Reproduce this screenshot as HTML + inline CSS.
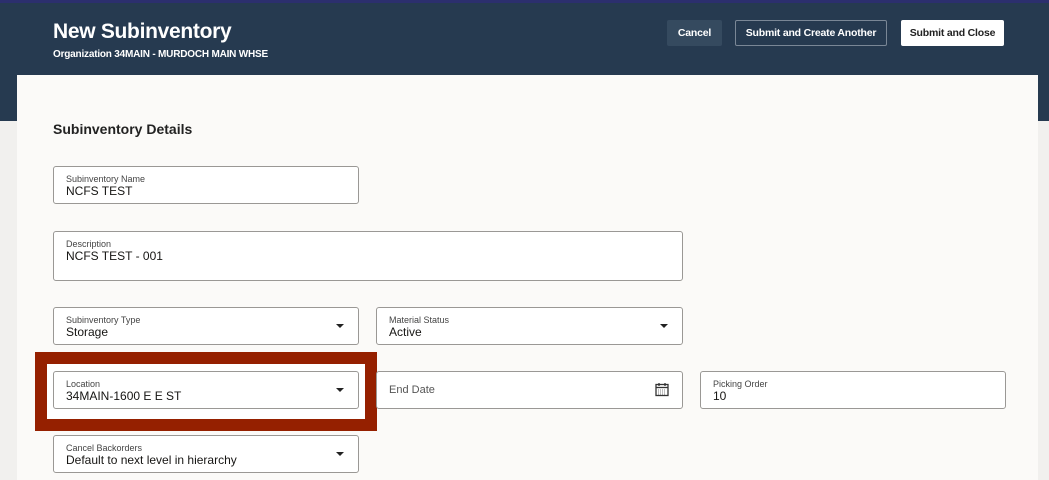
<!DOCTYPE html>
<html><head><style>
*{box-sizing:border-box;margin:0;padding:0}
body{width:1049px;height:480px;overflow:hidden;background:#f1f0ee;font-family:"Liberation Sans",sans-serif;position:relative}
.hdr{position:absolute;left:0;top:0;width:1049px;height:121px;background:#263a50;border-top:3px solid #2c2f6e}
.t{position:absolute;left:53px;top:20px;color:#fff;font-size:21px;font-weight:bold;letter-spacing:-0.3px}
.st{position:absolute;left:53px;top:49px;color:#fff;font-size:10px;font-weight:bold;letter-spacing:-0.2px}
.btn{position:absolute;top:20px;height:26px;font-size:10.5px;font-weight:bold;letter-spacing:-0.2px;display:flex;align-items:center;justify-content:center;border-radius:2px}
.card{position:absolute;left:17px;top:75px;width:1021px;height:405px;background:#fbfaf8}
.sec{position:absolute;left:53px;top:121px;font-size:14px;font-weight:bold;color:#222}
.f{position:absolute;background:#fff;border:1px solid #9a9895;border-radius:3px}
.l{position:absolute;left:12px;top:7px;font-size:9px;color:#444}
.v{position:absolute;left:12px;top:17px;font-size:12px;color:#161513}
.c{position:absolute;right:14px;top:16px;width:0;height:0;border-left:4px solid transparent;border-right:4px solid transparent;border-top:4px solid #222}
.red{position:absolute;left:35px;top:352px;width:342px;height:79px;border:12px solid #952000;background:#fff}
</style></head><body>
<div class="hdr"></div>
<div class="t">New Subinventory</div>
<div class="st">Organization 34MAIN - MURDOCH MAIN WHSE</div>
<div class="btn" style="left:667px;width:55px;background:#354a5f;color:#fff">Cancel</div>
<div class="btn" style="left:735px;width:152px;border:1px solid #7a8796;color:#fff">Submit and Create Another</div>
<div class="btn" style="left:901px;width:103px;background:#fff;color:#222">Submit and Close</div>
<div class="card"></div>
<div class="sec">Subinventory Details</div>
<div class="f" style="left:53px;top:166px;width:306px;height:38px"><div class="l">Subinventory Name</div><div class="v">NCFS TEST</div></div>
<div class="f" style="left:53px;top:231px;width:630px;height:50px"><div class="l">Description</div><div class="v">NCFS TEST - 001</div></div>
<div class="f" style="left:53px;top:307px;width:306px;height:38px"><div class="l">Subinventory Type</div><div class="v">Storage</div><div class="c"></div></div>
<div class="f" style="left:376px;top:307px;width:307px;height:38px"><div class="l">Material Status</div><div class="v">Active</div><div class="c"></div></div>
<div class="red"></div>
<div class="f" style="left:53px;top:371px;width:306px;height:38px"><div class="l">Location</div><div class="v">34MAIN-1600 E E ST</div><div class="c"></div></div>
<div class="f" style="left:376px;top:371px;width:307px;height:38px"><div style="position:absolute;left:12px;top:12px;font-size:11px;color:#555">End Date</div>
<svg style="position:absolute;right:13px;top:10px" width="14" height="15" viewBox="0 0 14 15"><rect x="1" y="2.5" width="12" height="11" fill="none" stroke="#333" stroke-width="1.3"/><line x1="1" y1="5.5" x2="13" y2="5.5" stroke="#333" stroke-width="1.3"/><line x1="4" y1="1" x2="4" y2="4" stroke="#333" stroke-width="1.3"/><line x1="10" y1="1" x2="10" y2="4" stroke="#333" stroke-width="1.3"/><path d="M3 8h8M3 10h8M3 12h8" stroke="#555" stroke-width="0.8" stroke-dasharray="1 1"/></svg></div>
<div class="f" style="left:700px;top:371px;width:306px;height:38px"><div class="l">Picking Order</div><div class="v">10</div></div>
<div class="f" style="left:53px;top:435px;width:306px;height:38px"><div class="l">Cancel Backorders</div><div class="v">Default to next level in hierarchy</div><div class="c"></div></div>
</body></html>
